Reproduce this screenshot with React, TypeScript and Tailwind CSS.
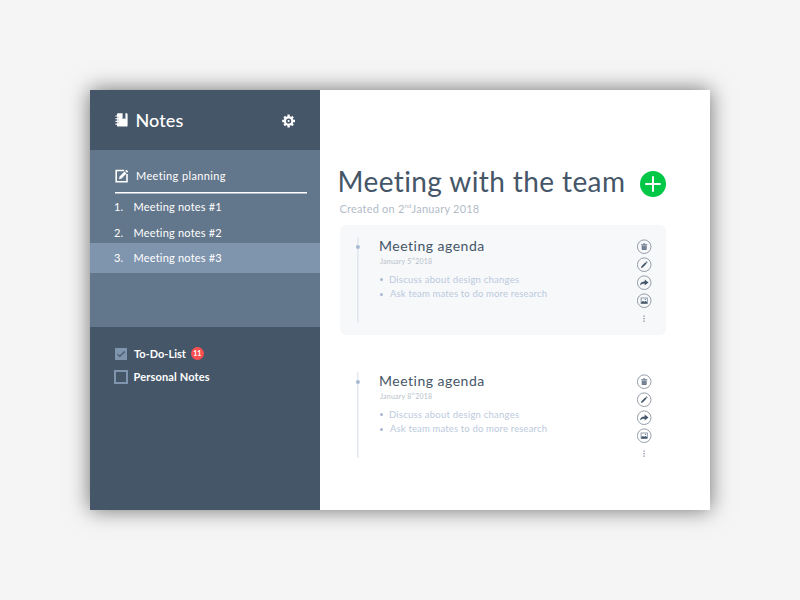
import React from "react";

function Notebook() {
  return (
    <svg width="13" height="14" viewBox="0 0 13 14" className="shrink-0">
      <path d="M2 1.2Q2 .3 3 .3H7.6V6.2L9 5.2 10.4 6.2V.3H11.5Q12.6.3 12.6 1.4V12.4Q12.6 13.6 11.5 13.6H3Q2 13.6 2 12.7Z" fill="#fff" />
      <path d="M.4 3H3M.4 5.7H3M.4 8.4H3M.4 11.1H3" stroke="#fff" strokeWidth="1.1" />
      <path d="M2.4 4.3H3.6M2.4 7H3.6M2.4 9.7H3.6" stroke="#455668" strokeWidth=".6" />
    </svg>
  );
}

function Gear() {
  return (
    <svg width="14" height="14" viewBox="0.4 0 14 14" className="shrink-0">
      <g stroke="#fff" fill="none">
        <path d="M7 .6V3M7 11V13.4M.6 7H3M11 7H13.4M2.6 2.6L4.2 4.2M9.8 9.8L11.4 11.4M2.6 11.4L4.2 9.8M9.8 4.2L11.4 2.6" strokeWidth="2.3" />
        <circle cx="7" cy="7" r="3.7" strokeWidth="2.2" />
      </g>
      <circle cx="7" cy="7" r="1.1" fill="#fff" />
    </svg>
  );
}

function Compose() {
  return (
    <svg width="14" height="14" viewBox="0 0 14 14" className="shrink-0">
      <path d="M9.2 1.5H1.2V12.8H12V5" fill="none" stroke="#fff" strokeWidth="1.6" />
      <path d="M4 10.3L4.6 7.6 9.5 2.6 11.4 4.5 6.6 9.6Z" fill="#fff" />
      <path d="M10.2 1.9L11.4.7 13.2 2.5 12 3.7Z" fill="#fff" />
    </svg>
  );
}

const glyphs: React.ReactNode[] = [
  <g key="trash">
    <path d="M5 6.2H10V10Q10 10.8 9.2 10.8H5.8Q5 10.8 5 10Z" fill="#66758a" />
    <path d="M4.4 5.5H10.6M6.4 4.7H8.6" stroke="#66758a" strokeWidth=".9" />
    <path d="M6.5 6.8V10M8.5 6.8V10" stroke="#a8b0bb" strokeWidth=".5" />
  </g>,
  <g key="pencil">
    <path d="M4.3 10.7L4.8 9 8.7 5.1 9.9 6.3 6 10.2Z" fill="#455668" />
    <path d="M9.1 4.7L9.8 4 11 5.2 10.3 5.9Z" fill="#455668" />
  </g>,
  <g key="share">
    <path d="M3.2 10.2C3.5 7.5 5 6.3 8 6.3V4.3L11.8 7.4 8 10.4V8.5C5.8 8.4 4.4 8.8 3.2 10.2Z" fill="#455668" />
  </g>,
  <g key="image">
    <rect x="4.4" y="4.8" width="6.2" height="5.6" fill="none" stroke="#77869a" strokeWidth=".8" />
    <path d="M4.6 10.2V8.9L6.2 7.7 7.6 8.6 8.8 7.9 10.4 8.9V10.2Z" fill="#455668" />
    <circle cx="8.6" cy="6.4" r=".5" fill="#455668" />
  </g>,
];

function Actions() {
  return (
    <div className="flex w-[15px] shrink-0 flex-col items-center gap-[3px]">
      {glyphs.map((glyph, i) => (
        <svg key={i} width="15" height="15" viewBox="0.3 -0.2 15 15" className="shrink-0">
          <circle cx="7.5" cy="7.5" r="6.8" fill="none" stroke="#8a939e" strokeWidth=".9" />
          {glyph}
        </svg>
      ))}
      <svg width="15" height="15" viewBox="0.3 0 15 15" className="shrink-0">
        <path d="M6.7 5.2H8.1M6.7 7.7H8.1M6.7 10.2H8.1" stroke="#8792a0" strokeWidth="1.2" />
      </svg>
    </div>
  );
}

function Agenda({ day, shaded }: { day: string; shaded?: boolean }) {
  return (
    <article className={`flex h-[110px] w-[326px] rounded-[6px] pl-[15px] pr-[14px] ${shaded ? "bg-[#f6f8fa]" : ""}`}>
      <svg width="6" height="110" viewBox="0 0 6 110" className="shrink-0">
        <path d="M2.8 12V98" stroke="#dce1ed" strokeWidth="1.2" />
        <circle cx="2.9" cy="22" r="2" fill="#a8b9d2" />
      </svg>
      <div className="flex flex-1 flex-col pl-[18px] pt-[12px] whitespace-nowrap">
        <h2 className="h-[18px] text-[14px] leading-[18px] tracking-[0.5px] text-[#455668]">Meeting agenda</h2>
        <p className="h-[12px] pl-px text-[7px] leading-[12px] tracking-[0.23px] text-[#b6bfca]">
          January {day}
          <span className="relative -top-[4px] text-[3.5px]">th</span>2018
        </p>
        <ul className="mt-[5.5px] text-[9.5px] leading-[14.4px] text-[#bccadd]">
          <li className="flex items-center">
            <span className="ml-px mr-[6px] size-[3px] rounded-full bg-[#a8b9d2]" />
            <span className="tracking-[0.23px]">Discuss about design changes</span>
          </li>
          <li className="flex items-center">
            <span className="ml-px mr-[7px] size-[3px] rounded-full bg-[#a8b9d2]" />
            <span className="tracking-[0.15px]">Ask team mates to do more research</span>
          </li>
        </ul>
      </div>
      <div className="pt-[14px]">
        <Actions />
      </div>
    </article>
  );
}

export default function App() {
  return (
    <div className="flex h-[600px] w-[800px] items-center justify-center bg-[#f5f5f5] font-['Lato','Noto_Sans',sans-serif]">
      <div className="flex h-[420px] w-[620px] bg-white shadow-[0_0_20px_rgba(0,0,0,0.55)]">
        <aside className="flex w-[230px] shrink-0 flex-col bg-[#455668] text-white whitespace-nowrap">
          <header className="flex h-[60px] items-center pl-[25px] pr-[24px]">
            <Notebook />
            <h1 className="ml-[7.5px] flex-1 text-[18px] leading-[20px] font-medium tracking-[0.1px]">Notes</h1>
            <div className="pt-[2px]">
              <Gear />
            </div>
          </header>
          <section className="h-[177px] bg-[#63778c]">
            <div className="ml-[25px] flex h-[43px] w-[192px] items-center pt-[9px]">
              <Compose />
              <span className="ml-[7px] text-[11px] tracking-[0.38px]">Meeting planning</span>
            </div>
            <div className="-mt-px ml-[25px] h-px w-[192px] bg-white" />
            <div className="ml-[25px] h-px w-[192px] bg-white/50" />
            <ol className="-mt-px text-[11px] tracking-[0.2px]">
              <li className="flex h-[25px] items-center pt-[4px] pl-[24px]">
                <span className="w-[19.5px]">1.</span>Meeting notes #1
              </li>
              <li className="flex h-[25px] items-center pt-[5px] pl-[24px]">
                <span className="w-[19.5px]">2.</span>Meeting notes #2
              </li>
              <li className="flex h-[30px] items-center bg-[#7f95ae] pt-px pl-[24px]">
                <span className="w-[19.5px]">3.</span>Meeting notes #3
              </li>
            </ol>
          </section>
          <section className="pt-[15px] pl-[24px] text-[11px] font-bold">
            <div className="flex h-[23px] items-center">
              <svg width="14" height="14" viewBox="0 0 14 14">
                <rect x="1" y="1" width="12" height="12" fill="#7f95ae" />
                <path d="M3.4 7.2L5.8 9.5 10.7 4.5" fill="none" stroke="#455668" strokeWidth="1.1" />
              </svg>
              <span className="ml-[6px] pt-px">To-Do-List</span>
              <span className="ml-[5px] flex size-[13px] items-center justify-center rounded-full bg-[#f94f50] text-[7px]">11</span>
            </div>
            <div className="flex h-[24px] items-center">
              <svg width="14" height="14" viewBox="0 0 14 14">
                <rect x="1" y="1" width="12" height="12" fill="none" stroke="#7f95ae" strokeWidth="2" />
              </svg>
              <span className="ml-[5.5px] pt-px tracking-[0.15px]">Personal Notes</span>
            </div>
          </section>
        </aside>
        <main className="flex flex-1 flex-col pt-[73px] pl-[20px]">
          <div className="flex h-[36px] w-[326px] items-center justify-between whitespace-nowrap">
            <h1 className="-ml-[2.5px] text-[28px] leading-[36px] tracking-[0.4px] text-[#455668]">Meeting with the team</h1>
            <svg width="26" height="26" viewBox="0 0 26 26" className="mt-[5px] shrink-0">
              <circle cx="13" cy="13" r="13" fill="#00c746" />
              <path d="M13 6V20M6 13H20" stroke="#fff" strokeWidth="2" strokeLinecap="round" />
            </svg>
          </div>
          <p className="-ml-[0.5px] h-[26px] pt-[1px] text-[11px] leading-[17px] tracking-[0.2px] text-[#b3bcc8] whitespace-nowrap">
            Created on 2<span className="relative -top-[5px] text-[6px]">nd</span>January 2018
          </p>
          <Agenda day="5" shaded />
          <div className="mt-[25px]">
            <Agenda day="8" />
          </div>
        </main>
      </div>
    </div>
  );
}
